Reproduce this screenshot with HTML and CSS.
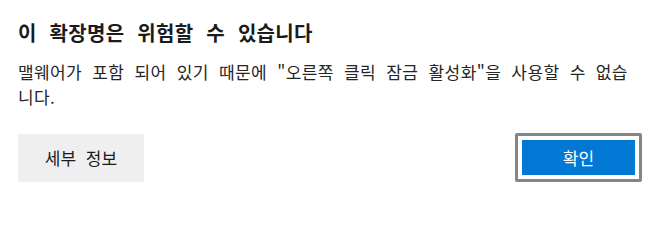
FILE: index.html
```html
<!DOCTYPE html>
<html lang="ko">
<head>
<meta charset="utf-8">
<link rel="stylesheet" href="styles.css">
</head>
<body>
<div class="dialog">
  <h1 class="title">이 확장명은 위험할 수 있습니다</h1>
  <p class="message">맬웨어가 포함 되어 있기 때문에 "오른쪽 클릭 잠금 활성화"을 사용할 수 없습니다.</p>
  <div class="actions">
    <button class="btn btn-secondary">세부 정보</button>
    <button class="btn btn-primary">확인</button>
  </div>
</div>
</body>
</html>
```
FILE: styles.css
```css
html, body {
  margin: 0;
  padding: 0;
  background: #ffffff;
}
.dialog {
  width: 655px;
  height: 205px;
  box-sizing: border-box;
  padding: 20px 18px 0 18px;
  font-family: "Noto Sans CJK KR", "Noto Sans", sans-serif;
  display: flex;
  flex-direction: column;
}
.title {
  margin: 0;
  font-size: 20px;
  font-weight: 700;
  line-height: 26px;
  color: #1b1b1b;
  letter-spacing: 0.3px;
  word-spacing: 7px;
}
.message {
  margin: 13px 0 0 0;
  font-size: 17px;
  line-height: 25px;
  color: #262626;
  letter-spacing: 0.4px;
  word-spacing: 5px;
}
.actions {
  margin-top: 24px;
  margin-right: -5px;
  display: flex;
  justify-content: space-between;
  align-items: center;
}
.btn {
  width: 126px;
  height: 48px;
  box-sizing: border-box;
  font-family: "Noto Sans CJK KR", "Noto Sans", sans-serif;
  font-size: 17px;
  border-radius: 2px;
  cursor: pointer;
  padding: 0;
}
.btn-secondary {
  background: #efefef;
  border: none;
  color: #1b1b1b;
  word-spacing: 5px;
}
.btn-primary {
  width: 127px;
  height: 49px;
  background: #0078d4;
  color: #ffffff;
  border: 3px solid #858585;
  box-shadow: inset 0 0 0 4px #ffffff;
}
```
